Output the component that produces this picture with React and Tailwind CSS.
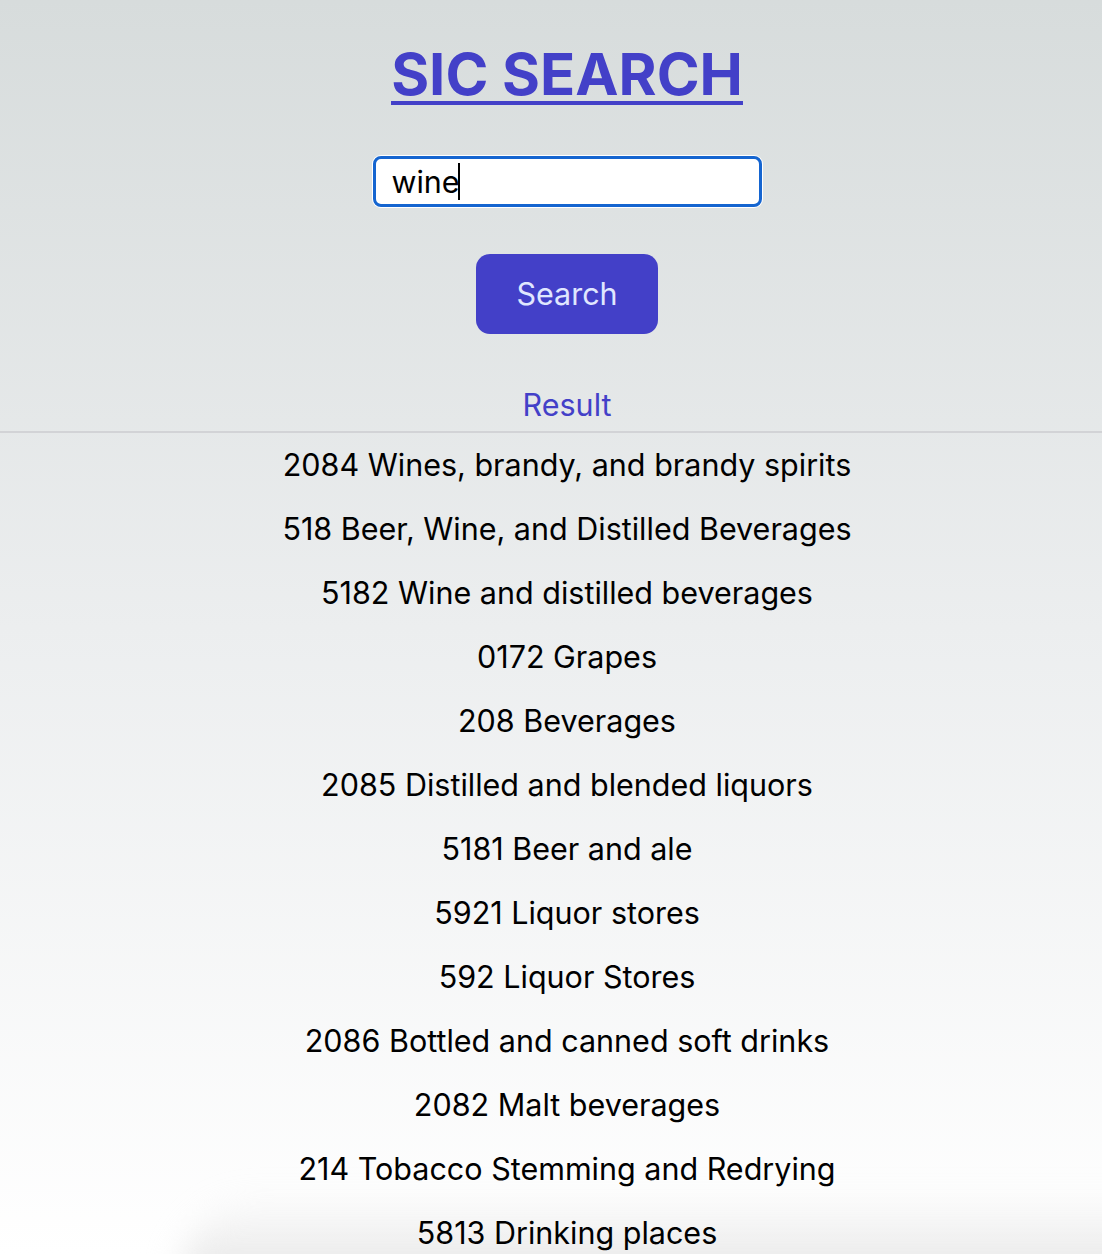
import React, { useState } from 'react';

const results = [
  '2084 Wines, brandy, and brandy spirits',
  '518 Beer, Wine, and Distilled Beverages',
  '5182 Wine and distilled beverages',
  '0172 Grapes',
  '208 Beverages',
  '2085 Distilled and blended liquors',
  '5181 Beer and ale',
  '5921 Liquor stores',
  '592 Liquor Stores',
  '2086 Bottled and canned soft drinks',
  '2082 Malt beverages',
  '214 Tobacco Stemming and Redrying',
  '5813 Drinking places',
];

export default function App() {
  const [query, setQuery] = useState('wine');

  return (
    <div className="relative h-screen overflow-hidden bg-gradient-to-b from-[#d7dcdc] via-[#eceeef] to-white font-['Inter',sans-serif] text-black">
      <div className="absolute bottom-[-30px] left-[180px] right-[-40px] h-[90px] rounded-tl-[120px] bg-gradient-to-b from-transparent to-[#e4e4e4] blur-lg" />

      <div className="relative flex flex-col items-center pl-8 pt-[44px]">
        <h1 className="text-[58px] font-bold leading-[60px] text-[#4340c8] underline decoration-[4px] underline-offset-[6px]">
          <a href="#">SIC SEARCH</a>
        </h1>

        <div className="relative mt-[52px]">
          <input
            type="text"
            value={query}
            onChange={(e) => setQuery(e.target.value)}
            className="h-[51px] w-[389px] rounded-lg border-[3px] border-[#1565d0] bg-white px-4 text-[30.5px] leading-none caret-transparent outline-none ring-1 ring-white"
          />
          {/* fake caret, the input isn't focused in the screenshot */}
          <span className="absolute left-[85px] top-[7px] h-[37px] w-[2px] bg-black" />
        </div>

        <button className="mt-[47px] h-[80px] w-[182px] rounded-[14px] bg-[#4340c8] text-[30.5px] text-[#e0e7ff]">
          Search
        </button>

        <div className="mt-[53px] text-[30.5px] leading-9 text-[#4340c8]">Result</div>
      </div>

      <div className="relative mt-2 border-t-2 border-[#d2d3d6]" />

      <ul className="relative flex flex-col items-center pl-8">
        {results.map((r) => (
          <li key={r} className="py-[14px] text-[30.5px] leading-9">
            {r}
          </li>
        ))}
      </ul>
    </div>
  );
}
